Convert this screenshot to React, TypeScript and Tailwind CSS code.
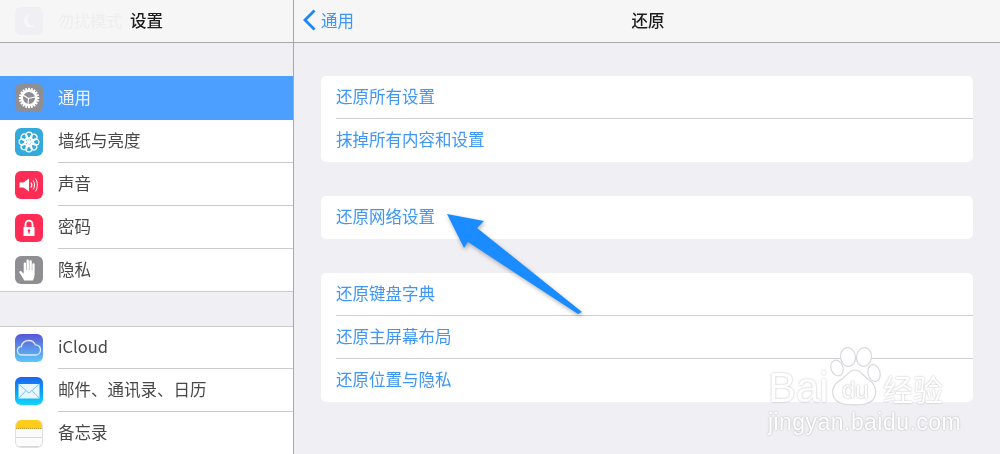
import React from 'react';

const cjk = "font-['Noto_Sans_CJK_SC','Noto_Sans',sans-serif]";

function Tile({ className, children }: { className: string; children: React.ReactNode }) {
  return (
    <div className={`w-[28px] h-[28px] rounded-[6px] shrink-0 flex items-center justify-center overflow-hidden ${className}`}>
      {children}
    </div>
  );
}

function GearIcon() {
  const teeth = Array.from({ length: 20 }, (_, i) => i * 18);
  return (
    <svg width="24" height="24" viewBox="0 0 24 24">
      {teeth.map((a) => (
        <rect key={a} x="11" y="1.800" width="2" height="3.200" fill="#fff" transform={`rotate(${a} 12 12)`} />
      ))}
      <circle cx="12" cy="12" r="7.200" fill="none" stroke="#fff" strokeWidth="2.400" />
      <path d="M11.500 12.500L6 9M11.500 12.500L18 11M11.500 12.500L11 18.500" stroke="#fff" strokeWidth="1.100" />
    </svg>
  );
}

function FlowerIcon() {
  const outer = [0, 45, 90, 135, 180, 225, 270, 315];
  return (
    <svg width="24" height="24" viewBox="0 0 24 24" fill="none" stroke="#fff" strokeWidth="1.200">
      {outer.map((r) => (
        <circle key={r} cx="12" cy="5.200" r="3.100" transform={`rotate(${r} 12 12)`} />
      ))}
      {[22, 94, 166, 238, 310].map((r) => (
        <circle key={r} cx="12" cy="9.500" r="2.200" transform={`rotate(${r} 12 12)`} />
      ))}
    </svg>
  );
}

function SpeakerIcon() {
  return (
    <svg width="24" height="24" viewBox="0 0 24 24" fill="none" stroke="#fff" strokeWidth="1">
      <path d="M2.500 9.500H6.500L12 5.500V18.500L6.500 14.500H2.500Z" fill="#fff" stroke="none" />
      <path d="M14 9.500C15 11 15 13 14 14.500" strokeWidth="1.300" />
      <path d="M16.200 7.500C18 10 18 14 16.200 16.500" />
      <path d="M18.400 5.500C21 9.500 21 14.500 18.400 18.500" />
    </svg>
  );
}

function LockIcon() {
  return (
    <svg width="24" height="24" viewBox="0 0 24 24">
      <path d="M8.500 11V8.200a3.500 3.500 0 0 1 7 0V11" fill="none" stroke="#fff" strokeWidth="1.800" />
      <path d="M6.500 11H17.500V20H6.500Z" fill="#fff" />
      <circle cx="12" cy="14.600" r="1.300" fill="#ff2d55" />
      <rect x="11.400" y="15" width="1.200" height="2.800" fill="#ff2d55" />
    </svg>
  );
}

function HandIcon() {
  return (
    <svg width="26" height="26" viewBox="0 0 26 26">
      <path
        d="M8.200 23.500C6.800 21 5.600 18.500 3.500 15.800c-.8-1.200.8-2.400 1.900-1.300l2.300 2.300V6.800c0-1.800 2.300-1.800 2.300 0v6.200h.5V3.900c0-1.800 2.400-1.800 2.400 0V13h.5V4.700c0-1.800 2.400-1.800 2.400 0V13.500h.5V7.500c0-1.700 2.300-1.700 2.300 0v9.500c0 2.600-.7 4.600-1.700 6.500Z"
        fill="#fff"
      />
    </svg>
  );
}

function CloudIcon() {
  return (
    <svg width="28" height="28" viewBox="0 0 28 28">
      <path
        d="M7 21C4 21 2.500 19 2.500 16.800s1.600-4 3.800-4.100C7 9 10 6.500 13.800 6.500c3.100 0 5.500 1.800 6.500 4.300 3.200-.2 5.200 2.400 5.200 5.100 0 2.900-2.200 5.100-5 5.100Z"
        fill="none"
        stroke="#dfe8ff"
        strokeWidth="1.300"
      />
    </svg>
  );
}

function MailIcon() {
  return (
    <svg width="24" height="24" viewBox="0 0 24 24">
      <rect x="1.500" y="5" width="21" height="14.500" fill="#e8f6ff" />
      <path d="M1.500 5L12 14L22.500 5M1.500 19.500L9 11.500M22.500 19.500L15 11.500" fill="none" stroke="#5db4fb" strokeWidth="0.800" />
    </svg>
  );
}

function NotesTile() {
  return (
    <div className="w-[28px] h-[28px] rounded-[6px] shrink-0 overflow-hidden bg-[#fbfbfb] border-x border-b border-[#e0e0e0] flex flex-col">
      <div className="h-[9px] bg-[#ffcc1c] border-b border-dotted border-[#b89a30] shrink-0 -mx-[1px]" />
      <div className="h-[9px] border-b border-[#d8d8d8] shrink-0" />
      <div className="h-[9px] border-b border-[#d8d8d8] shrink-0" />
    </div>
  );
}

function SideRow({ icon, label, active, noLine, className }: { icon: React.ReactNode; label: string; active?: boolean; noLine?: boolean; className: string }) {
  return (
    <div className={`flex items-center pl-[15px] shrink-0 ${active ? 'bg-[#4c9fff]' : 'bg-white'} ${className}`}>
      {icon}
      <div className={`ml-[15px] flex-1 h-full flex items-center pb-[2px] text-[16.500px] ${active ? 'text-[#eaf3ff]' : 'text-[#484848]'} ${noLine ? '' : 'border-b border-[#cbcbcf]'}`}>
        {label}
      </div>
    </div>
  );
}

function Card({ rows }: { rows: string[] }) {
  return (
    <div className="bg-white rounded-[5px] overflow-hidden">
      {rows.map((r, i) => (
        <div key={r} className="pl-[15px] h-[43px]">
          <div className={`h-full flex items-center text-[16.500px] text-[#3f96f7] ${i < rows.length - 1 ? 'pb-[1px] border-b border-[#cfcfd2]' : 'pb-[3px]'}`}>{r}</div>
        </div>
      ))}
    </div>
  );
}

function Watermark() {
  const ghost = 'text-white [text-shadow:0_0_2px_rgba(0,0,0,0.3)]';
  const sans = "font-['Liberation_Sans',sans-serif]";
  return (
    <div className="absolute left-[765px] top-[346px] w-[190px] h-[92px] pointer-events-none">
      <div className={`absolute left-[3px] top-[21px] text-[42px] leading-[42px] ${sans} ${ghost}`}>Bai</div>
      <div className={`absolute left-[118px] top-[24px] text-[30px] leading-[36px] ${cjk} ${ghost}`}>经验</div>
      <div className={`absolute left-[3px] top-[62px] text-[23px] leading-[28px] tracking-[0.450px] whitespace-nowrap ${sans} ${ghost}`}>jingyan.baidu.com</div>
      <svg className="absolute left-0 top-0" width="190" height="62" viewBox="0 0 190 62" fill="#ffffff" stroke="#d9d9dd" strokeWidth="1.200">
        <ellipse cx="83" cy="11" rx="7.500" ry="9.500" transform="rotate(-8 83 11)" />
        <ellipse cx="99" cy="11" rx="7.500" ry="9.500" transform="rotate(8 99 11)" />
        <ellipse cx="72" cy="22" rx="6" ry="8" transform="rotate(-20 72 22)" />
        <ellipse cx="109" cy="27" rx="6" ry="8.500" transform="rotate(-15 109 27)" />
        <path d="M90 24C96 24 98 30 104 34C113 40 114 55 100 58C95 59 85 59 79 58C66 56 64 42 74 35C82 31 83 24 90 24Z" />
      </svg>
      <div className={`absolute left-[77px] top-[31px] text-[24px] leading-[26px] ${sans} text-white [text-shadow:0_0_2px_rgba(0,0,0,0.35)]`}>du</div>
    </div>
  );
}

export default function App() {
  return (
    <div className={`relative flex w-[1000px] h-[454px] overflow-hidden bg-[#efeff4] blur-[0.35px] ${cjk}`}>
      <div className="w-[294px] h-full shrink-0 border-r border-[#a8a8ab] flex flex-col overflow-hidden">
        <header className="relative h-[43px] shrink-0 bg-[#f6f6f6] border-b border-[#a9a9ab] flex items-center pl-[15px]">
          <div className="w-[28px] h-[28px] rounded-[6px] bg-[#efeff4] flex items-center justify-center">
            <svg width="18" height="18" viewBox="0 0 18 18"><path d="M10 2C6 3 4 6 4 9.500c0 3.500 3 6 6.500 6 2 0 3.500-.7 4.500-2-4 .5-7.500-2-7.500-6C7.500 5.500 8.500 3.500 10 2Z" fill="#f7f7f9" /></svg>
          </div>
          <span className="ml-[15px] pb-[2px] text-[16px] text-[#eeeeef]">勿扰模式</span>
          <span className="absolute left-[130px] pb-[2px] text-[16.500px] font-medium text-[#1c1c1c]">设置</span>
        </header>
        <div className="h-[33px] shrink-0" />
        <SideRow active noLine className="h-[44px]" label="通用" icon={<Tile className="bg-[#8e8e93]"><GearIcon /></Tile>} />
        <SideRow className="h-[43px]" label="墙纸与亮度" icon={<Tile className="bg-[#34aadc]"><FlowerIcon /></Tile>} />
        <SideRow className="h-[43px]" label="声音" icon={<Tile className="bg-[#ff2d55]"><SpeakerIcon /></Tile>} />
        <SideRow className="h-[43px]" label="密码" icon={<Tile className="bg-[#ff2d55]"><LockIcon /></Tile>} />
        <SideRow noLine className="h-[42px]" label="隐私" icon={<Tile className="bg-[#8e8e93]"><HandIcon /></Tile>} />
        <div className="h-[36px] shrink-0 border-y border-[#cbcbcf]" />
        <SideRow className="h-[42px]" label="iCloud" icon={<Tile className="bg-gradient-to-b from-[#5856d6] to-[#5ac8fa]"><CloudIcon /></Tile>} />
        <SideRow className="h-[43px]" label="邮件、通讯录、日历" icon={<Tile className="bg-gradient-to-b from-[#1d62f0] to-[#19d5fd]"><MailIcon /></Tile>} />
        <SideRow noLine className="h-[43px]" label="备忘录" icon={<NotesTile />} />
      </div>

      <div className="flex-1 min-w-0 flex flex-col">
        <header className="relative h-[43px] shrink-0 bg-[#f6f6f6] border-b border-[#a9a9ab] flex items-center justify-center">
          <div className="absolute left-[8px] top-0 h-full flex items-center pb-[2px] text-[#1a87fb]">
            <svg width="14" height="22" viewBox="0 0 14 22" fill="none" stroke="currentColor" strokeWidth="2.800"><path d="M12.500 1.500L3 11L12.500 20.500" /></svg>
            <span className="ml-[5px] text-[16.500px] text-[#3f96f7]">通用</span>
          </div>
          <span className="pb-[2px] ml-[2px] text-[16.500px] font-medium text-[#1c1c1c]">还原</span>
        </header>
        <div className="pt-[33px] pl-[27px] pr-[27px] flex flex-col gap-[34px]">
          <Card rows={['还原所有设置', '抹掉所有内容和设置']} />
          <Card rows={['还原网络设置']} />
          <Card rows={['还原键盘字典', '还原主屏幕布局', '还原位置与隐私']} />
        </div>
      </div>

      <svg className="absolute left-[440px] top-[205px]" width="150" height="115" viewBox="440 205 150 115" style={{ filter: 'drop-shadow(1px 2px 2px rgba(0,0,0,0.3))' }}>
        <path d="M447 214L484 221L477 228L582 312L578 314L468 242L464 248Z" fill="#1a8cff" />
      </svg>

      <Watermark />
    </div>
  );
}
